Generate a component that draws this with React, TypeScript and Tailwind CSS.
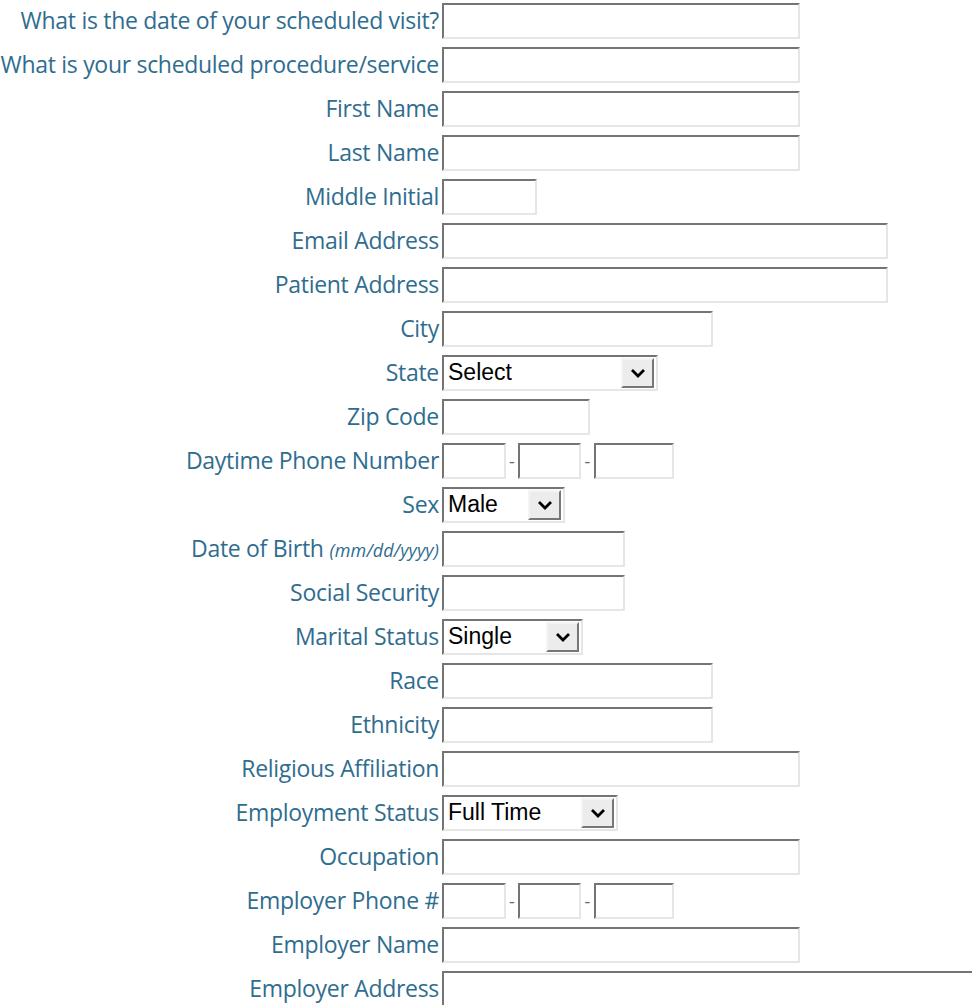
import React from "react";

type Field =
  | { kind: "text"; label: string; width: number; hint?: string }
  | { kind: "select"; label: string; width: number; value: string }
  | { kind: "phone"; label: string };

const fields: Field[] = [
  { kind: "text", label: "What is the date of your scheduled visit?", width: 358 },
  { kind: "text", label: "What is your scheduled procedure/service", width: 358 },
  { kind: "text", label: "First Name", width: 358 },
  { kind: "text", label: "Last Name", width: 358 },
  { kind: "text", label: "Middle Initial", width: 95 },
  { kind: "text", label: "Email Address", width: 446 },
  { kind: "text", label: "Patient Address", width: 446 },
  { kind: "text", label: "City", width: 271 },
  { kind: "select", label: "State", width: 216, value: "Select" },
  { kind: "text", label: "Zip Code", width: 148 },
  { kind: "phone", label: "Daytime Phone Number" },
  { kind: "select", label: "Sex", width: 123, value: "Male" },
  { kind: "text", label: "Date of Birth", width: 183, hint: "(mm/dd/yyyy)" },
  { kind: "text", label: "Social Security", width: 183 },
  { kind: "select", label: "Marital Status", width: 141, value: "Single" },
  { kind: "text", label: "Race", width: 271 },
  { kind: "text", label: "Ethnicity", width: 271 },
  { kind: "text", label: "Religious Affiliation", width: 358 },
  { kind: "select", label: "Employment Status", width: 176, value: "Full Time" },
  { kind: "text", label: "Occupation", width: 358 },
  { kind: "phone", label: "Employer Phone #" },
  { kind: "text", label: "Employer Name", width: 358 },
  { kind: "text", label: "Employer Address", width: 540 },
];

const inset =
  "h-[36px] border-2 border-t-[#747474] border-l-[#747474] border-b-[#e6e6e6] border-r-[#e6e6e6] bg-white";

const TextBox = ({ width }: { width: number }) => (
  <input type="text" className={`${inset} shrink-0 outline-none`} style={{ width }} />
);

const SelectBox = ({ width, value }: { width: number; value: string }) => (
  <div
    className={`${inset} shrink-0 flex items-center justify-between pl-[4px] pr-[2px]`}
    style={{ width }}
  >
    <span className="text-[23px] leading-none -mt-[2px] text-black font-['Liberation_Sans',Arial,sans-serif]">
      {value}
    </span>
    <span className="h-[30px] w-[33px] flex items-center justify-center bg-[#ececec] border-2 border-t-[#f4f4f4] border-l-[#f4f4f4] border-b-[#777] border-r-[#777]">
      <svg width="16" height="10" viewBox="0 0 16 10">
        <path d="M2 2 L8 8 L14 2" fill="none" stroke="#000" strokeWidth="2.8" />
      </svg>
    </span>
  </div>
);

const PhoneBox = () => (
  <div className="flex items-center">
    <TextBox width={64} />
    <span className="w-[12px] text-center text-[#666] text-[18px]">-</span>
    <TextBox width={63} />
    <span className="w-[13px] text-center text-[#666] text-[18px]">-</span>
    <TextBox width={80} />
  </div>
);

export default function App() {
  return (
    <div className="w-[972px] h-[1005px] overflow-hidden bg-white pt-[3px] font-['Open_Sans',sans-serif]">
      <div className="flex flex-col gap-[8px]">
        {fields.map((f) => (
          <div key={f.label} className="flex items-center h-[36px]">
            <label className="w-[442px] shrink-0 pr-[3px] -mt-[2px] text-right text-[23px] tracking-[-0.3px] text-[#2f6d8f] whitespace-nowrap">
              {f.label}
              {f.kind === "text" && f.hint && (
                <span className="italic text-[18px] ml-[6px] tracking-[0.1px]">{f.hint}</span>
              )}
            </label>
            {f.kind === "text" && <TextBox width={f.width} />}
            {f.kind === "select" && <SelectBox width={f.width} value={f.value} />}
            {f.kind === "phone" && <PhoneBox />}
          </div>
        ))}
      </div>
    </div>
  );
}
